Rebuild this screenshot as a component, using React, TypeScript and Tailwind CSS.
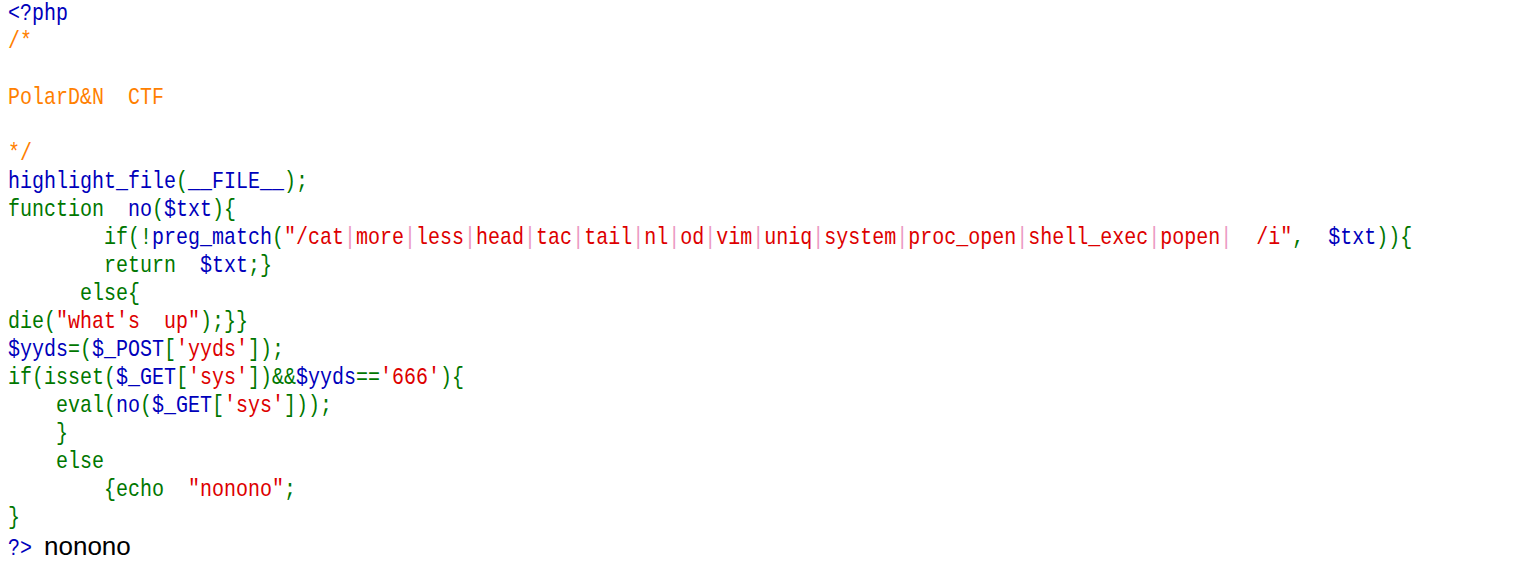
import React from "react";

type Seg = [string, string];

const B = "text-[#0000BB]";
const G = "text-[#007700]";
const R = "text-[#DD0000]";
const O = "text-[#FF8000]";
const P = "text-[#ec9ac4]";

function Str({ s }: { s: string }) {
  // render a red string where '|' are shown lighter
  const parts = s.split(/(\|)/);
  return (
    <>
      {parts.map((p, i) =>
        p === "|" ? (
          <span key={i} className={P}>
            |
          </span>
        ) : (
          <span key={i} className={R}>
            {p}
          </span>
        )
      )}
    </>
  );
}

const lines: Seg[][] = [
  [[B, "<?php"]],
  [[O, "/*"]],
  [[O, ""]],
  [[O, "PolarD&N  CTF"]],
  [[O, ""]],
  [[O, "*/"]],
  [
    [B, "highlight_file"],
    [G, "("],
    [B, "__FILE__"],
    [G, ");"],
  ],
  [
    [G, "function  "],
    [B, "no"],
    [G, "("],
    [B, "$txt"],
    [G, "){"],
  ],
  [
    [G, "        if(!"],
    [B, "preg_match"],
    [G, "("],
    ["S", '"/cat|more|less|head|tac|tail|nl|od|vim|uniq|system|proc_open|shell_exec|popen|  /i"'],
    [G, ",  "],
    [B, "$txt"],
    [G, ")){"],
  ],
  [
    [G, "        return  "],
    [B, "$txt"],
    [G, ";}"],
  ],
  [[G, "      else{"]],
  [
    [G, "die("],
    [R, "\"what's  up\""],
    [G, ");}}"],
  ],
  [
    [B, "$yyds"],
    [G, "=("],
    [B, "$_POST"],
    [G, "["],
    [R, "'yyds'"],
    [G, "]);"],
  ],
  [
    [G, "if(isset("],
    [B, "$_GET"],
    [G, "["],
    [R, "'sys'"],
    [G, "])&&"],
    [B, "$yyds"],
    [G, "=="],
    [R, "'666'"],
    [G, "){"],
  ],
  [
    [G, "    eval("],
    [B, "no"],
    [G, "("],
    [B, "$_GET"],
    [G, "["],
    [R, "'sys'"],
    [G, "]));"],
  ],
  [[G, "    }"]],
  [[G, "    else"]],
  [
    [G, "        {echo  "],
    [R, '"nonono"'],
    [G, ";"],
  ],
  [[G, "}"]],
];

export default function App() {
  return (
    <div className="min-h-[578px] w-full bg-white pl-2 font-['Liberation_Mono',monospace] text-[24px] leading-[28px]">
      <div className="origin-left scale-x-[0.83333] whitespace-pre">
        {lines.map((segs, i) => (
          <div key={i} className="h-[28px]">
            {segs.map(([c, t], j) =>
              c === "S" ? (
                <Str key={j} s={t} />
              ) : (
                <span key={j} className={c}>
                  {t}
                </span>
              )
            )}
          </div>
        ))}
      </div>
      <div className="flex h-[28px] items-baseline">
        <span className={`inline-block w-[36px] shrink-0 origin-left scale-x-[0.83333] whitespace-pre ${B}`}>
          {"?> "}
        </span>
        <span className="font-['Liberation_Sans',Arial,sans-serif] text-[26px] text-black">nonono</span>
      </div>
    </div>
  );
}
